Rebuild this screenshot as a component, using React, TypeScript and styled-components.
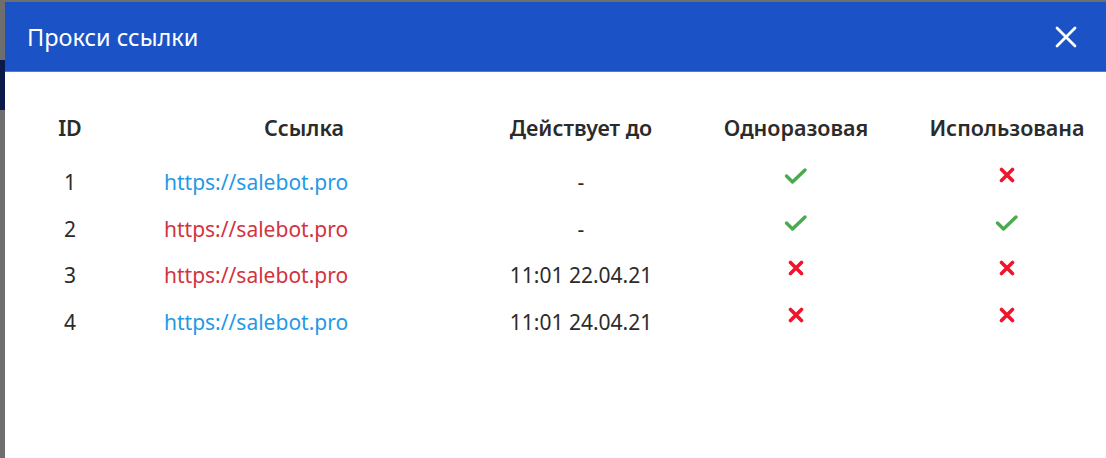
import React from 'react';
import styled, { createGlobalStyle } from 'styled-components';

const GlobalStyle = createGlobalStyle`
	html, body {
		margin: 0;
		padding: 0;
		background: #6e6e6e;
		font-family: 'Noto Sans', 'Open Sans', sans-serif;
	}
`;

interface ProxyLink {
	id: number;
	url: string;
	active: boolean;
	expires: string;
	oneTime: boolean;
	used: boolean;
}

const links: ProxyLink[] = [
	{ id: 1, url: 'https://salebot.pro', active: true, expires: '-', oneTime: true, used: false },
	{ id: 2, url: 'https://salebot.pro', active: false, expires: '-', oneTime: true, used: true },
	{ id: 3, url: 'https://salebot.pro', active: false, expires: '11:01 22.04.21', oneTime: false, used: false },
	{ id: 4, url: 'https://salebot.pro', active: true, expires: '11:01 24.04.21', oneTime: false, used: false }
];

const Page = styled.div`
	display: flex;
	height: 458px;
	overflow: hidden;
`;

const Behind = styled.div`
	width: 5px;
	flex-shrink: 0;
	display: flex;
	flex-direction: column;
	padding-top: 60px;

	.nav {
		height: 50px;
		background: #0b1a48;
	}
`;

const Modal = styled.div`
	flex: 1;
	margin-top: 2px;
	background: #fff;
	display: flex;
	flex-direction: column;
`;

const Header = styled.div`
	height: 70px;
	background: #1b53c7;
	border-bottom: 1px solid #4d78d6;
	box-sizing: border-box;
	display: flex;
	align-items: center;
	justify-content: space-between;
	padding: 0 29px 0 22px;
`;

const Title = styled.h1`
	margin: 0;
	color: #fff;
	font-size: 23.5px;
	font-weight: 400;
`;

const CloseButton = styled.button`
	border: none;
	background: none;
	padding: 0;
	display: flex;
	cursor: pointer;
`;

const Table = styled.div`
	display: grid;
	grid-template-columns: 90px 378px 176px 254px 168px;
	grid-template-rows: 54px;
	grid-auto-rows: 46.5px;
	padding: 42px 0 0 20px;
	color: #2b2b2b;
	font-size: 21px;
`;

const HeadCell = styled.div`
	font-weight: 600;
	font-size: 21.5px;
	text-align: center;
	line-height: 28px;
`;

const Cell = styled.div<{ $align?: 'left' | 'center' }>`
	text-align: ${p => p.$align || 'center'};
	padding-left: ${p => (p.$align === 'left' ? '49px' : '0')};
	line-height: 28px;
	white-space: nowrap;
`;

const IconCell = styled.div`
	display: flex;
	justify-content: center;
	margin-top: -1px;
`;

const LinkText = styled.a<{ $active: boolean }>`
	color: ${p => (p.$active ? '#1f9ae6' : '#d3333d')};
	text-decoration: none;
`;

const Check = () => (
	<svg width="24" height="18" viewBox="0 0 24 18">
		<polyline points="2.5,9 8.5,15 21,3" fill="none" stroke="#4aaa4e" strokeWidth="3.4" strokeLinecap="round" strokeLinejoin="round"/>
	</svg>
);

const Cross = () => (
	<svg width="24" height="18" viewBox="0 0 24 18">
		<path d="M6.5 2.5 L17.5 13.5 M17.5 2.5 L6.5 13.5" fill="none" stroke="#f0152c" strokeWidth="3.6" strokeLinecap="round"/>
	</svg>
);

const Mark = ({ ok }: { ok: boolean }) => (ok ? <Check/> : <Cross/>);

const App = () => {
	return (
		<Page>
			<GlobalStyle/>
			<Behind>
				<div className='nav'/>
			</Behind>
			<Modal>
				<Header>
					<Title>Прокси ссылки</Title>
					<CloseButton aria-label='close'>
						<svg width="22" height="22" viewBox="0 0 22 22">
							<path d="M2 2 L20 20 M20 2 L2 20" stroke="#fff" strokeWidth="2.8" strokeLinecap="round"/>
						</svg>
					</CloseButton>
				</Header>
				<Table>
					<HeadCell>ID</HeadCell>
					<HeadCell>Ссылка</HeadCell>
					<HeadCell>Действует до</HeadCell>
					<HeadCell>Одноразовая</HeadCell>
					<HeadCell>Использована</HeadCell>
					{links.map(link => (
						<React.Fragment key={link.id}>
							<Cell>{link.id}</Cell>
							<Cell $align='left'>
								<LinkText $active={link.active} href='#'>{link.url}</LinkText>
							</Cell>
							<Cell>{link.expires}</Cell>
							<IconCell><Mark ok={link.oneTime}/></IconCell>
							<IconCell><Mark ok={link.used}/></IconCell>
						</React.Fragment>
					))}
				</Table>
			</Modal>
		</Page>
	);
};

export default App;
